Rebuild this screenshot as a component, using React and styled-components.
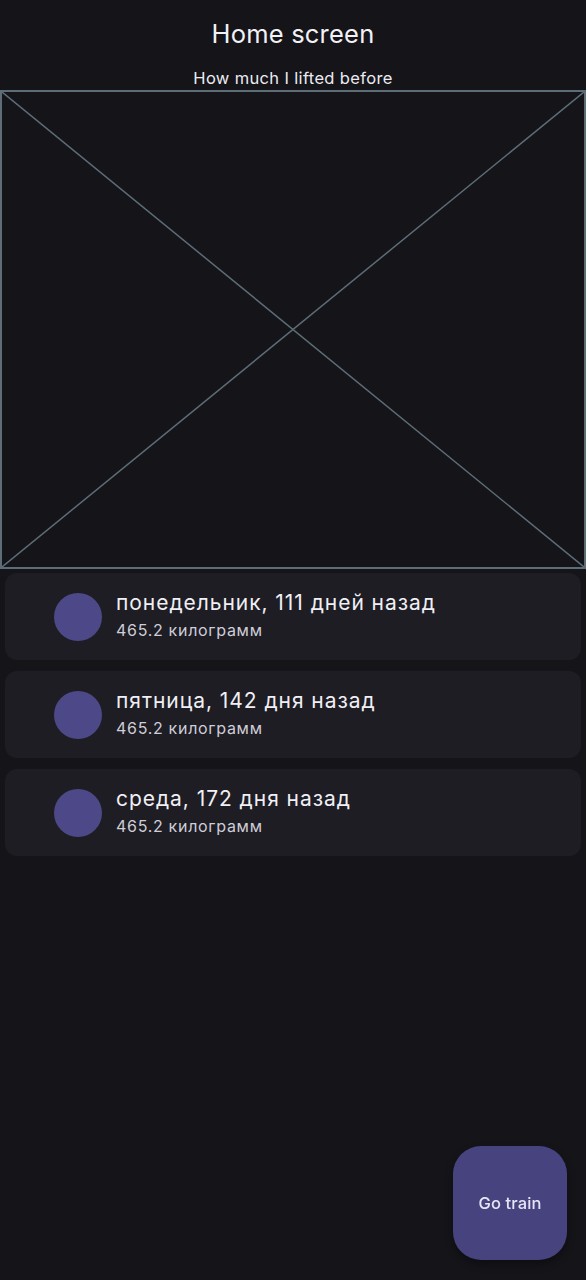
import React from "react";
import styled, { createGlobalStyle } from "styled-components";

const GlobalStyle = createGlobalStyle`
  html, body {
    margin: 0;
    padding: 0;
    background: #141419;
  }
  body {
    font-family: Inter, "Noto Sans", sans-serif;
    color: #ecebf2;
  }
`;

const Screen = styled.div`
  min-height: 1280px;
  display: flex;
  flex-direction: column;
  background: #141419;
`;

const Title = styled.h1`
  margin: 0;
  padding-top: 19px;
  height: 31px;
  font-size: 25.5px;
  line-height: 30px;
  font-weight: 400;
  letter-spacing: 0.2px;
  text-align: center;
  color: #f2f1f6;
`;

const Caption = styled.div`
  margin-top: 18px;
  font-size: 16.5px;
  line-height: 20px;
  letter-spacing: 0.35px;
  text-align: center;
  color: #ecebf2;
`;

const Placeholder = styled.div`
  height: 479px;
  margin-top: 2px;
  border: 2px solid #5d6d78;
  box-sizing: border-box;

  svg {
    display: block;
    width: 100%;
    height: 100%;
  }
`;

const List = styled.div`
  display: flex;
  flex-direction: column;
  gap: 11px;
  padding: 4px 5px 0;
`;

const Card = styled.div`
  height: 87px;
  display: flex;
  align-items: center;
  gap: 14px;
  padding-left: 49px;
  border-radius: 12px;
  background: #1d1d23;
`;

const Avatar = styled.div`
  width: 48px;
  height: 48px;
  border-radius: 50%;
  background: #4d4988;
  flex-shrink: 0;
`;

const Text = styled.div`
  display: flex;
  flex-direction: column;
  gap: 4px;
  margin-top: -4px;
`;

const Headline = styled.div`
  font-size: 21px;
  line-height: 26px;
  letter-spacing: 0.95px;
  color: #f0eff5;
`;

const Supporting = styled.div`
  font-size: 16px;
  line-height: 20px;
  letter-spacing: 0.7px;
  color: #cfcdd8;
`;

const Fab = styled.button`
  position: fixed;
  right: 19px;
  bottom: 20px;
  width: 114px;
  height: 114px;
  border: none;
  border-radius: 28px;
  background: #46437f;
  color: #e6e4f5;
  font-family: Inter, "Noto Sans", sans-serif;
  font-size: 16.5px;
  font-weight: 500;
  letter-spacing: 0.1px;
  box-shadow: 0 4px 8px rgba(0, 0, 0, 0.3);
`;

const workouts = [
  { day: "понедельник, 111 дней назад", weight: "465.2 килограмм" },
  { day: "пятница, 142 дня назад", weight: "465.2 килограмм" },
  { day: "среда, 172 дня назад", weight: "465.2 килограмм" },
];

export default function App() {
  return (
    <Screen>
      <GlobalStyle />
      <Title>Home screen</Title>
      <Caption>How much I lifted before</Caption>
      <Placeholder>
        <svg viewBox="0 0 586 478" preserveAspectRatio="none">
          <line x1="0" y1="0" x2="586" y2="478" stroke="#5d6d78" strokeWidth="1.5" />
          <line x1="586" y1="0" x2="0" y2="478" stroke="#5d6d78" strokeWidth="1.5" />
        </svg>
      </Placeholder>
      <List>
        {workouts.map((w) => (
          <Card key={w.day}>
            <Avatar />
            <Text>
              <Headline>{w.day}</Headline>
              <Supporting>{w.weight}</Supporting>
            </Text>
          </Card>
        ))}
      </List>
      <Fab>Go train</Fab>
    </Screen>
  );
}
